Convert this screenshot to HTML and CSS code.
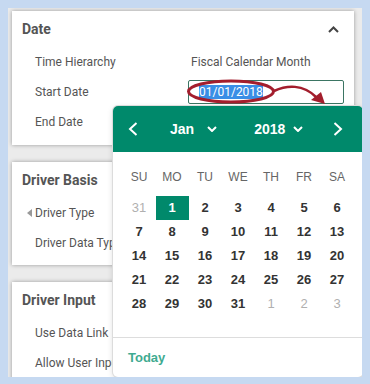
FILE: index.html
```html
<!DOCTYPE html>
<html lang="en">
<head>
<meta charset="UTF-8" />
<meta name="viewport" content="width=device-width, initial-scale=1" />
<title>Driver settings</title>
<link rel="stylesheet" href="styles.css">
</head>
<body>

<div class="page">
  <section class="panel">
    <div class="panel-head">
      <h2>Date</h2>
      <svg class="collapse" width="11" height="7" viewBox="0 0 11 7"><path d="M1 6 L5.5 1.5 L10 6" fill="none" stroke="#444" stroke-width="2"/></svg>
    </div>
    <div class="row"><span class="label">Time Hierarchy</span><span class="value">Fiscal Calendar Month</span></div>
    <div class="row"><span class="label">Start Date</span><div class="input"><span class="sel">01/01/2018</span></div></div>
    <div class="row"><span class="label">End Date</span></div>
  </section>

  <section class="panel">
    <div class="panel-head"><h2>Driver Basis</h2></div>
    <div class="row caret-row"><span class="caret"></span><span class="label">Driver Type</span></div>
    <div class="row"><span class="label">Driver Data Type</span></div>
  </section>

  <section class="panel">
    <div class="panel-head"><h2>Driver Input</h2></div>
    <div class="row"><span class="label">Use Data Link</span></div>
    <div class="row"><span class="label">Allow User Input</span></div>
  </section>

  <!-- calendar popup for Start Date -->
  <div class="datepicker">
    <div class="dp-head">
      <svg class="nav" width="10" height="14" viewBox="0 0 10 14"><path d="M8.5 1 L2 7 L8.5 13" fill="none" stroke="#fff" stroke-width="2"/></svg>
      <span class="dp-month">Jan</span>
      <svg class="drop" width="10" height="6" viewBox="0 0 10 6"><path d="M1 1 L5 5 L9 1" fill="none" stroke="#fff" stroke-width="2"/></svg>
      <span class="dp-year">2018</span>
      <svg class="drop" width="10" height="6" viewBox="0 0 10 6"><path d="M1 1 L5 5 L9 1" fill="none" stroke="#fff" stroke-width="2"/></svg>
      <svg class="nav nav-next" width="10" height="14" viewBox="0 0 10 14"><path d="M1.5 1 L8 7 L1.5 13" fill="none" stroke="#fff" stroke-width="2"/></svg>
    </div>
    <div class="dp-body">
      <div class="dp-names">
        <span>SU</span><span>MO</span><span>TU</span><span>WE</span><span>TH</span><span>FR</span><span>SA</span>
      </div>
      <div class="dp-days">
        <span class="other">31</span><span class="today">1</span><span>2</span><span>3</span><span>4</span><span>5</span><span>6</span>
        <span>7</span><span>8</span><span>9</span><span>10</span><span>11</span><span>12</span><span>13</span>
        <span>14</span><span>15</span><span>16</span><span>17</span><span>18</span><span>19</span><span>20</span>
        <span>21</span><span>22</span><span>23</span><span>24</span><span>25</span><span>26</span><span>27</span>
        <span>28</span><span>29</span><span>30</span><span>31</span><span class="other">1</span><span class="other">2</span><span class="other">3</span>
      </div>
    </div>
    <div class="dp-foot">Today</div>
  </div>
</div>

<!-- red annotation drawn over the screenshot -->
<svg class="annotation" width="370" height="384" viewBox="0 0 370 384">
  <ellipse cx="231" cy="91.5" rx="42.5" ry="10.5" fill="none" stroke="#a31e2d" stroke-width="3"/>
  <path d="M274 91 C287 85 303 84 316 97" fill="none" stroke="#a31e2d" stroke-width="2.5"/>
  <polygon points="311,100 321,92 325,104" fill="#a31e2d"/>
</svg>

</body>
</html>
```

FILE: styles.css
```css
body {
  margin: 8px;
  background: #c6d9f1;
  font-family: Roboto, 'Liberation Sans', sans-serif;
  color: #555;
}
.page {
  position: relative;
  width: 355px;
  height: 369px;
  box-sizing: border-box;
  padding: 3px 9px 0 4px;
  background: #ebebeb;
  overflow: hidden;
  display: flex;
  flex-direction: column;
  gap: 17px;
}
.panel {
  flex-shrink: 0;
  background: #fff;
  box-shadow: 0 0 4px rgba(0, 0, 0, 0.35);
  padding-bottom: 8px;
}
.panel + .panel {
  padding-bottom: 7px;
}
.panel-head {
  height: 36px;
  display: flex;
  align-items: center;
  justify-content: space-between;
  padding: 0 15px 0 10px;
}
.panel-head h2 {
  margin: 0;
  font-size: 14px;
  font-weight: 700;
  color: #555;
}
.row {
  height: 30px;
  display: flex;
  align-items: center;
  padding-left: 23px;
  font-size: 12px;
  white-space: nowrap;
}
.row.caret-row {
  padding-left: 15px;
}
.caret {
  width: 0;
  height: 0;
  border-top: 4px solid transparent;
  border-bottom: 4px solid transparent;
  border-right: 5px solid #999;
  margin-right: 3px;
}
.label {
  width: 153px;
  flex-shrink: 0;
}
.value {
  padding-left: 3px;
}
.input {
  width: 156px;
  height: 24px;
  box-sizing: border-box;
  border: 1px solid #3b7563;
  border-radius: 2px;
  padding-left: 10px;
  display: flex;
  align-items: center;
}
.input .sel {
  background: #3a8ee6;
  color: #fff;
  line-height: 14px;
}

/* date picker popup */
.datepicker {
  position: absolute;
  left: 105px;
  top: 98px;
  width: 250px;
  height: 271px;
  background: #fff;
  border-radius: 5px;
  overflow: hidden;
  box-shadow: 0 0 0 1px #dcdcdc, 0 2px 6px rgba(0, 0, 0, 0.15);
  font-family: 'Liberation Sans', Arial, sans-serif;
}
.dp-head {
  height: 46px;
  background: #00896b;
  color: #fff;
  display: flex;
  align-items: center;
  padding-left: 15px;
  font-size: 14px;
  font-weight: 700;
}
.dp-month {
  margin-left: 32px;
  margin-right: 13px;
}
.dp-year {
  margin-left: 37px;
  margin-right: 8px;
}
.nav-next {
  margin-left: 30px;
}
.dp-body {
  padding: 13px 9.5px 21px;
  border-bottom: 1px solid #ddd;
}
.dp-names,
.dp-days {
  display: grid;
  grid-template-columns: repeat(7, 33px);
  text-align: center;
}
.dp-names span {
  height: 24px;
  line-height: 24px;
  font-size: 12px;
  color: #666;
}
.dp-days {
  margin-top: 7px;
}
.dp-days span {
  height: 24px;
  line-height: 24px;
  font-size: 13px;
  font-weight: 700;
  color: #333;
}
.dp-days .other {
  font-weight: 400;
  color: #b0b0b0;
}
.dp-days .today {
  background: #00896b;
  color: #fff;
}
.dp-foot {
  height: 39px;
  line-height: 39px;
  padding-left: 15px;
  font-size: 13px;
  font-weight: 700;
  color: #3fab91;
}

.annotation {
  position: absolute;
  left: 0;
  top: 0;
  pointer-events: none;
}
```
